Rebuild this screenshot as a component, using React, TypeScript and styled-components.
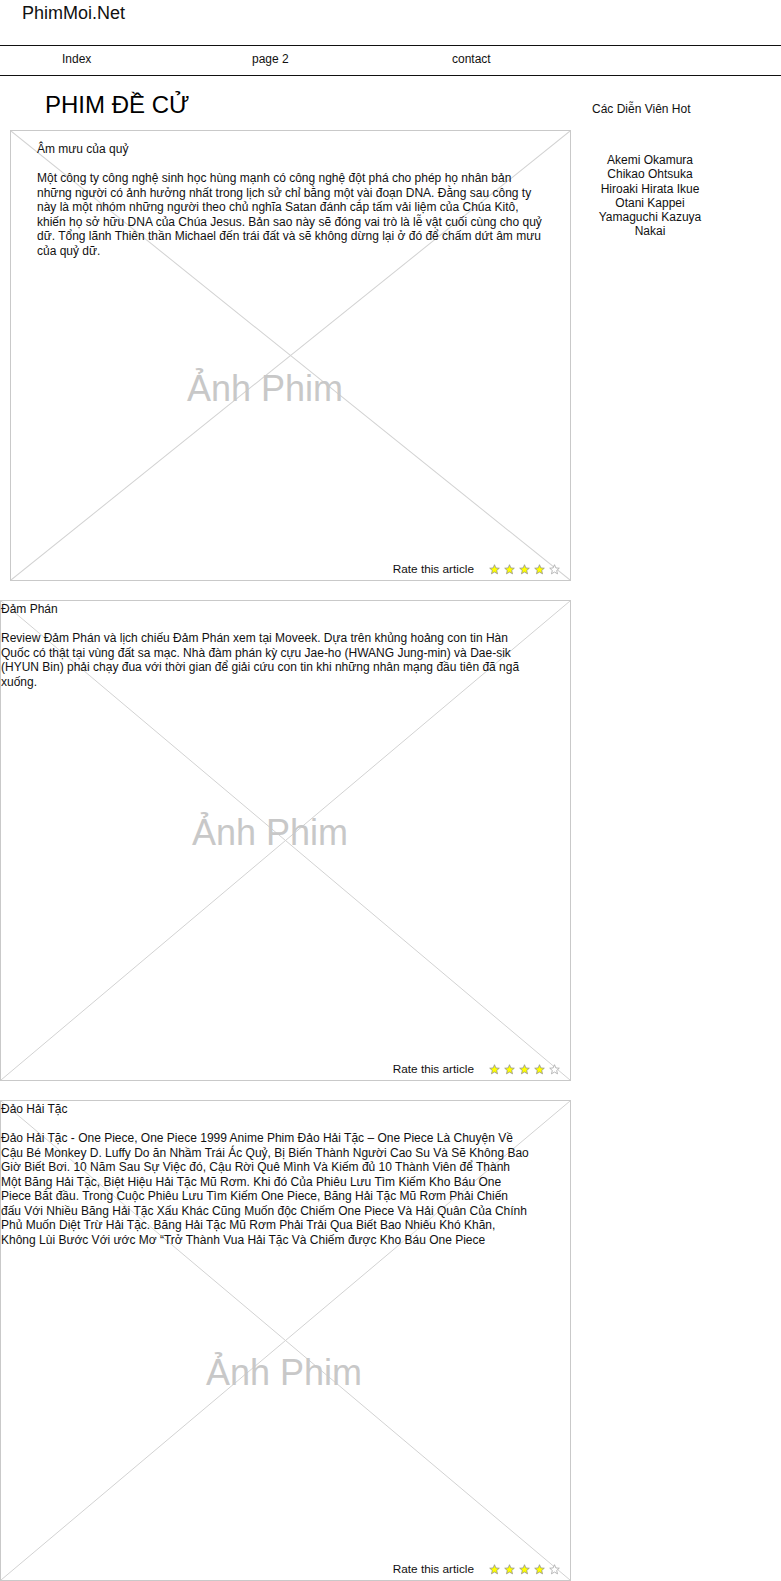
import React from "react";
import styled, { createGlobalStyle } from "styled-components";

const GlobalStyle = createGlobalStyle`
  html, body {
    margin: 0;
    padding: 0;
    background: #ffffff;
  }
  body {
    font-family: "Liberation Sans", Arial, sans-serif;
    color: #000;
  }
`;

const Page = styled.div`
  width: 781px;
`;

const Header = styled.header`
  height: 45px;
  padding-left: 22px;
  box-sizing: border-box;
  padding-top: 3px;
`;

const Logo = styled.div`
  font-size: 18px;
  line-height: 21px;
  color: #111;
`;

const Nav = styled.nav`
  display: grid;
  grid-template-columns: 190px 200px auto;
  align-items: center;
  height: 31px;
  box-sizing: border-box;
  border-top: 1px solid #111;
  border-bottom: 1px solid #111;
  padding-left: 62px;
  padding-bottom: 3px;
  font-size: 12px;
`;

const NavLink = styled.span`
  color: #111;
`;

const Main = styled.div`
  display: grid;
  grid-template-columns: 571px 1fr;
  align-items: start;
`;

const Content = styled.div`
  display: flex;
  flex-direction: column;
  align-items: flex-start;
`;

const PageTitle = styled.h1`
  margin: 15px 0 11px 45px;
  font-size: 24px;
  line-height: 28px;
  font-weight: normal;
  color: #000;
`;

const Card = styled.article<{ $inset?: boolean; $h: number }>`
  position: relative;
  box-sizing: border-box;
  width: ${(p) => (p.$inset ? 561 : 571)}px;
  height: ${(p) => p.$h}px;
  margin-left: ${(p) => (p.$inset ? 10 : 0)}px;
  margin-bottom: 19px;
  border: 1px solid #c9c9c9;
  display: flex;
  flex-direction: column;
  &:last-child {
    margin-bottom: 0;
  }
`;

const Cross = styled.svg`
  position: absolute;
  inset: 0;
  width: 100%;
  height: 100%;
  pointer-events: none;
`;

const PlaceholderLabel = styled.span`
  position: absolute;
  font-size: 36px;
  line-height: 36px;
  color: #c8c8c8;
  white-space: nowrap;
`;

const CardText = styled.div<{ $inset?: boolean; $w: number }>`
  position: relative;
  box-sizing: content-box;
  width: ${(p) => p.$w}px;
  padding: ${(p) => (p.$inset ? "11px 0 0 26px" : "1px 0 0 0")};
  font-size: 12px;
  line-height: 14.5px;
  color: #111;
`;

const CardTitle = styled.div`
  margin-bottom: 14.5px;
`;

const CardBody = styled.p`
  margin: 0;
`;

const RatingRow = styled.div`
  position: relative;
  margin-top: auto;
  display: flex;
  justify-content: flex-end;
  align-items: center;
  padding: 0 10px 4px 0;
  font-size: 11.8px;
  line-height: 13px;
  color: #111;
`;

const RateLabel = styled.span`
  margin-right: 15px;
`;

const Stars = styled.div`
  display: flex;
  gap: 4px;
`;

const StarIcon = styled.svg`
  width: 11px;
  height: 11px;
  display: block;
`;

const Sidebar = styled.aside`
  width: 140px;
  margin-left: 9px;
  font-size: 12px;
  color: #111;
`;

const SideTitle = styled.div`
  margin-top: 26px;
  padding-left: 12px;
  line-height: 14px;
`;

const ActorList = styled.ul`
  list-style: none;
  margin: 37px 0 0 0;
  padding: 0;
  text-align: center;
  line-height: 14.3px;
`;

const Star: React.FC<{ filled: boolean }> = ({ filled }) => (
  <StarIcon viewBox="0 0 24 24">
    <polygon
      points="12,1.5 15,8.6 22.5,9.2 16.8,14.1 18.6,21.5 12,17.5 5.4,21.5 7.2,14.1 1.5,9.2 9,8.6"
      fill={filled ? "#ffff00" : "#ffffff"}
      stroke={filled ? "#8c8c8c" : "#a0a0a0"}
      strokeWidth={1.6}
      strokeLinejoin="round"
    />
  </StarIcon>
);

type Movie = {
  title: string;
  body: string;
  inset?: boolean;
  height: number;
  textWidth: number;
  labelLeft: number;
  labelTop: number;
  rating: number;
};

const movies: Movie[] = [
  {
    title: "Âm mưu của quỷ",
    body:
      "Một công ty công nghệ sinh học hùng mạnh có công nghệ đột phá cho phép họ nhân bản những người có ảnh hưởng nhất trong lịch sử chỉ bằng một vài đoạn DNA. Đằng sau công ty này là một nhóm những người theo chủ nghĩa Satan đánh cắp tấm vải liệm của Chúa Kitô, khiến họ sở hữu DNA của Chúa Jesus. Bản sao này sẽ đóng vai trò là lễ vật cuối cùng cho quỷ dữ. Tổng lãnh Thiên thần Michael đến trái đất và sẽ không dừng lại ở đó để chấm dứt âm mưu của quỷ dữ.",
    inset: true,
    height: 451,
    textWidth: 507,
    labelLeft: 176,
    labelTop: 240,
    rating: 4,
  },
  {
    title: "Đảm Phán",
    body:
      "Review Đảm Phán và lịch chiếu Đảm Phán xem tại Moveek. Dựa trên khủng hoảng con tin Hàn Quốc có thật tại vùng đất sa mạc. Nhà đàm phán kỳ cựu Jae-ho (HWANG Jung-min) và Dae-sik (HYUN Bin) phải chạy đua với thời gian để giải cứu con tin khi những nhân mạng đầu tiên đã ngã xuống.",
    height: 481,
    textWidth: 535,
    labelLeft: 191,
    labelTop: 214,
    rating: 4,
  },
  {
    title: "Đảo Hải Tặc",
    body:
      "Đảo Hải Tặc - One Piece, One Piece 1999 Anime Phim Đảo Hải Tặc – One Piece Là Chuyện Về Cậu Bé Monkey D. Luffy Do ăn Nhầm Trái Ác Quỷ, Bị Biến Thành Người Cao Su Và Sẽ Không Bao Giờ Biết Bơi. 10 Năm Sau Sự Việc đó, Cậu Rời Quê Mình Và Kiếm đủ 10 Thành Viên để Thành Một Băng Hải Tặc, Biệt Hiệu Hải Tặc Mũ Rơm. Khi đó Của Phiêu Lưu Tìm Kiếm Kho Báu One Piece Bắt đầu. Trong Cuộc Phiêu Lưu Tìm Kiếm One Piece, Băng Hải Tặc Mũ Rơm Phải Chiến đấu Với Nhiều Băng Hải Tặc Xấu Khác Cũng Muốn độc Chiếm One Piece Và Hải Quân Của Chính Phủ Muốn Diệt Trừ Hải Tặc. Băng Hải Tặc Mũ Rơm Phải Trải Qua Biết Bao Nhiêu Khó Khăn, Không Lùi Bước Với ước Mơ “Trở Thành Vua Hải Tặc Và Chiếm được Kho Báu One Piece",
    height: 481,
    textWidth: 528,
    labelLeft: 205,
    labelTop: 254,
    rating: 4,
  },
];

const actors = [
  "Akemi Okamura",
  "Chikao Ohtsuka",
  "Hiroaki Hirata Ikue",
  "Otani Kappei",
  "Yamaguchi Kazuya",
  "Nakai",
];

const MovieCard: React.FC<{ movie: Movie }> = ({ movie }) => (
  <Card $inset={movie.inset} $h={movie.height}>
    <Cross preserveAspectRatio="none" viewBox="0 0 100 100">
      <line x1="0" y1="0" x2="100" y2="100" stroke="#d2d2d2" strokeWidth="1" vectorEffect="non-scaling-stroke" />
      <line x1="100" y1="0" x2="0" y2="100" stroke="#d2d2d2" strokeWidth="1" vectorEffect="non-scaling-stroke" />
    </Cross>
    <PlaceholderLabel style={{ left: movie.labelLeft, top: movie.labelTop }}>Ảnh Phim</PlaceholderLabel>
    <CardText $inset={movie.inset} $w={movie.textWidth}>
      <CardTitle>{movie.title}</CardTitle>
      <CardBody>{movie.body}</CardBody>
    </CardText>
    <RatingRow>
      <RateLabel>Rate this article</RateLabel>
      <Stars>
        {[0, 1, 2, 3, 4].map((i) => (
          <Star key={i} filled={i < movie.rating} />
        ))}
      </Stars>
    </RatingRow>
  </Card>
);

export default function App() {
  return (
    <Page>
      <GlobalStyle />
      <Header>
        <Logo>PhimMoi.Net</Logo>
      </Header>
      <Nav>
        <NavLink>Index</NavLink>
        <NavLink>page 2</NavLink>
        <NavLink>contact</NavLink>
      </Nav>
      <Main>
        <Content>
          <PageTitle>PHIM ĐỀ CỬ</PageTitle>
          {movies.map((m) => (
            <MovieCard key={m.title} movie={m} />
          ))}
        </Content>
        <Sidebar>
          <SideTitle>Các Diễn Viên Hot</SideTitle>
          <ActorList>
            {actors.map((a) => (
              <li key={a}>{a}</li>
            ))}
          </ActorList>
        </Sidebar>
      </Main>
    </Page>
  );
}
